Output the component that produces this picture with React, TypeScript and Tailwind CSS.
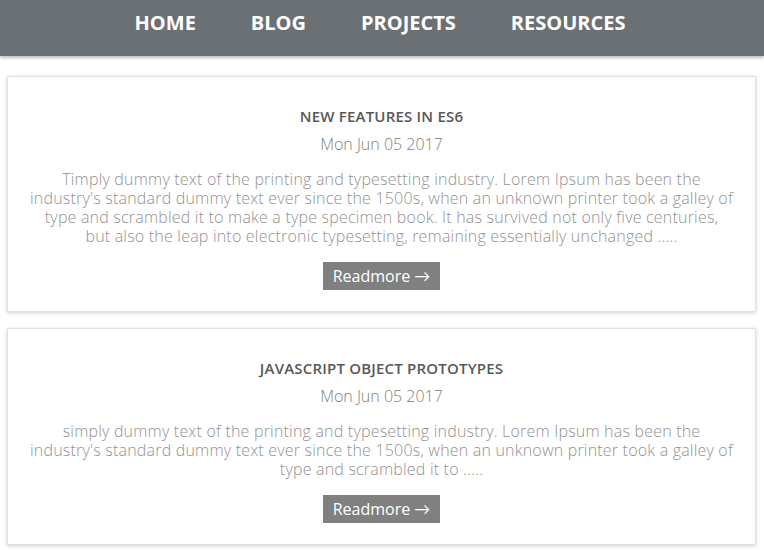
import React from "react";

const posts = [
  {
    title: "NEW FEATURES IN ES6",
    date: "Mon Jun 05 2017",
    body: [
      "Timply dummy text of the printing and typesetting industry. Lorem Ipsum has been the industry's standard dummy text ever since the 1500s, when an unknown printer took a galley of type and scrambled it to make a type specimen book. It has survived not only five centuries,",
      "but also the leap into electronic typesetting, remaining essentially unchanged .....",
    ],
  },
  {
    title: "JAVASCRIPT OBJECT PROTOTYPES",
    date: "Mon Jun 05 2017",
    body: [
      "simply dummy text of the printing and typesetting industry. Lorem Ipsum has been the industry's standard dummy text ever since the 1500s, when an unknown printer took a galley of type and scrambled it to .....",
    ],
  },
];

export default function App() {
  return (
    <div className="min-h-[550px] bg-white" style={{ fontFamily: "'Open Sans', Lato, sans-serif" }}>
      <nav className="h-[56px] bg-[#6b7074] shadow-[0_2px_3px_rgba(0,0,0,0.25)] flex items-center justify-center gap-[55px] pr-[4px] pb-[10px]">
        {["HOME", "BLOG", "PROJECTS", "RESOURCES"].map((n) => (
          <a key={n} className="text-white font-bold text-[20px]">
            {n}
          </a>
        ))}
      </nav>
      <div className="pl-[7px] pr-[8px] pt-[20px] flex flex-col gap-[16px]">
        {posts.map((p) => (
          <div
            key={p.title}
            className="border border-[#e0e0e0] shadow-[0_1px_4px_rgba(0,0,0,0.18)] bg-white flex flex-col items-center text-center px-[20px] pt-[30px] pb-[21px]"
          >
            <h2 className="text-[15px] font-semibold text-[#585858] leading-[18px] tracking-[0.2px]">{p.title}</h2>
            <div className="text-[16px] font-light text-[#808080] mt-[9px] leading-[20px]">{p.date}</div>
            <p className="max-w-[706px] text-[16px] font-light text-[#929292] leading-[19px] tracking-[0.2px] mt-[16px]">
              {p.body.map((seg, i) => (
                <React.Fragment key={i}>
                  {i > 0 && <br />}
                  {seg}
                </React.Fragment>
              ))}
            </p>
            <button className="mt-[16px] h-[28px] px-[10px] bg-[#808080] text-white text-[16px] font-normal leading-[28px]">
              Readmore →
            </button>
          </div>
        ))}
      </div>
    </div>
  );
}
